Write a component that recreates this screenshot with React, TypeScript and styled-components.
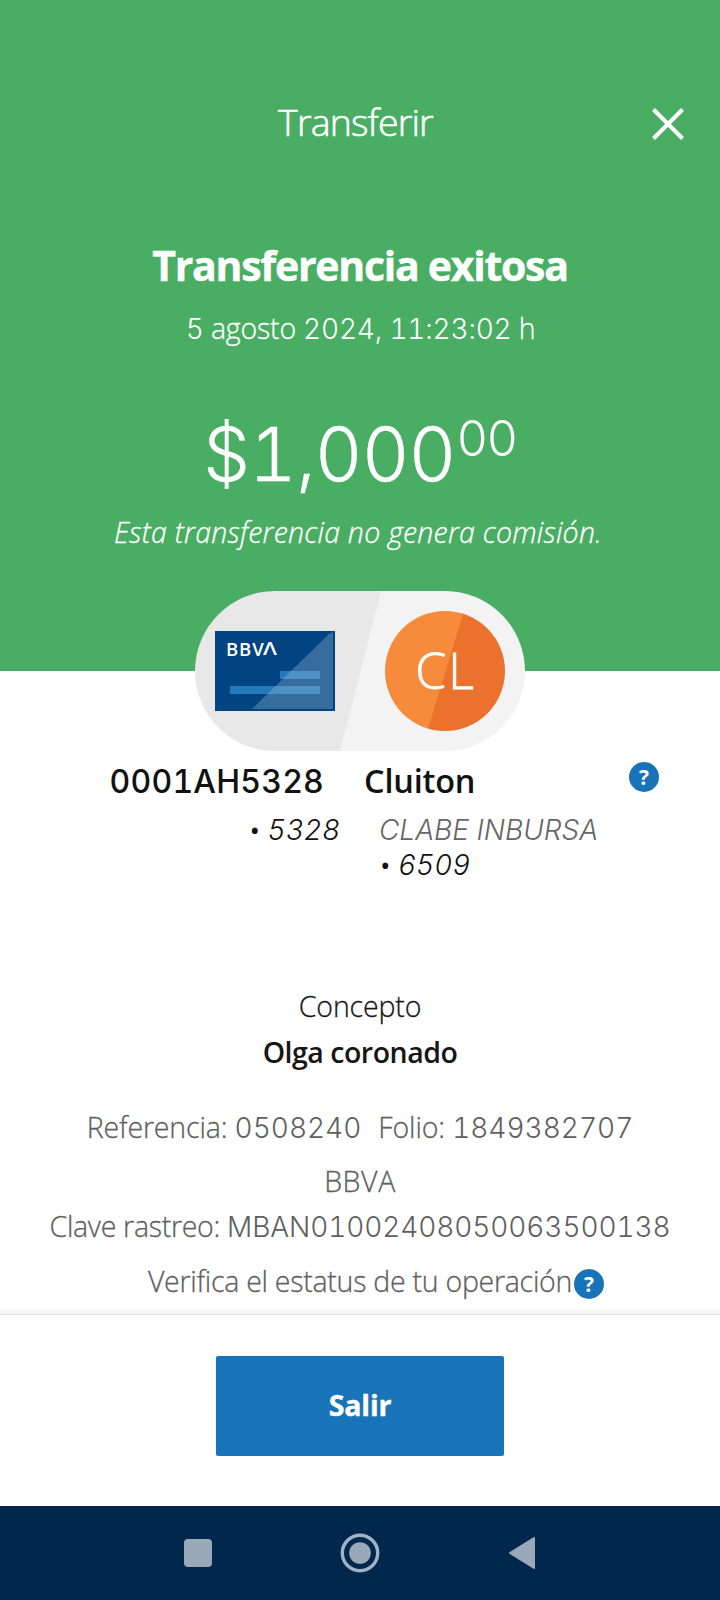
import React from "react";
import styled, { createGlobalStyle, css } from "styled-components";

const GlobalStyle = createGlobalStyle`
  * { box-sizing: border-box; }
  body {
    margin: 0;
    background: #ffffff;
    font-family: "Open Sans", "Noto Sans", sans-serif;
    font-weight: 300;
    color: #121212;
  }
`;

const tabular = css`
  font-family: "Inter", "Open Sans", sans-serif;
  font-variant-numeric: tabular-nums;
`;

const Screen = styled.main`
  display: flex;
  flex-direction: column;
  width: 720px;
  height: 1600px;
  overflow: hidden;
`;

const Header = styled.header`
  display: flex;
  flex-direction: column;
  align-items: center;
  flex: none;
  height: 671px;
  padding-top: 97px;
  background: #49ae64;
  color: #ffffff;
`;

const TitleBar = styled.div`
  display: grid;
  grid-template-columns: 130px 1fr 130px;
  align-items: center;
  width: 100%;
  height: 50px;
`;

const BarTitle = styled.h1`
  grid-column: 2;
  margin: 0;
  padding-right: 9px;
  font-size: 37.5px;
  line-height: 50px;
  font-weight: 300;
  letter-spacing: -0.85px;
  -webkit-text-stroke: 0.6px currentColor;
  text-align: center;
`;

const CloseButton = styled.button`
  display: flex;
  justify-self: end;
  margin: 3px 35px 0 0;
  padding: 0;
  border: 0;
  background: none;
  color: inherit;
`;

const Success = styled.h2`
  margin: 93px 0 0;
  font-size: 41px;
  line-height: 50px;
  font-weight: 700;
  letter-spacing: -1.27px;
  -webkit-text-stroke: 0.4px currentColor;
`;

const DateLine = styled.p`
  margin: 18px 0 0;
  padding-left: 1px;
  font-size: 28.5px;
  line-height: 40px;
  letter-spacing: -0.2px;
  -webkit-text-stroke: 0.3px currentColor;
  white-space: nowrap;
`;

const Digits = styled.span<{ $gap?: number }>`
  ${tabular}
  font-size: 28px;
  letter-spacing: ${(p) => p.$gap ?? 0}px;
  -webkit-text-stroke: 0;
`;

const Amount = styled.div`
  ${tabular}
  display: flex;
  align-items: flex-start;
  margin-top: 60px;
  font-size: 74px;
  line-height: 90px;
  letter-spacing: -1px;
  -webkit-text-stroke: 0.3px currentColor;
`;

const Cents = styled.span`
  margin-left: 1px;
  font-size: 49px;
  line-height: 60px;
  letter-spacing: -1.6px;
  -webkit-text-stroke: 0;
`;

const Fee = styled.p`
  margin: 13px 0 0;
  padding-right: 4px;
  font-size: 28.5px;
  line-height: 40px;
  font-style: italic;
  letter-spacing: 0.25px;
  -webkit-text-stroke: 0.3px currentColor;
  white-space: nowrap;
`;

const Parties = styled.div`
  display: flex;
  align-items: center;
  justify-content: space-between;
  flex: none;
  width: 330px;
  height: 160px;
  margin-top: 39px;
  padding: 0 20px;
  border-radius: 80px;
  background: linear-gradient(104.4deg, #e8e8e8 50%, #f3f3f3 50.3%);
`;

const Details = styled.section`
  display: flex;
  flex-direction: column;
  flex: none;
  height: 636px;
  padding-top: 90px;
`;

const PartyRow = styled.div<{ $height: number }>`
  display: grid;
  grid-template-columns: 360px 1fr auto;
  height: ${(p) => p.$height}px;
  line-height: ${(p) => p.$height}px;
`;

const Name = styled.strong<{ $side: "from" | "to" }>`
  font-weight: 600;
  ${(p) =>
    p.$side === "from"
      ? css`
          ${tabular}
          padding: 1px 36px 0 0;
          font-size: 32px;
          font-weight: 500;
          text-align: right;
          letter-spacing: 0.2px;
        `
      : css`
          padding-left: 4px;
          font-size: 32.5px;
          letter-spacing: -0.2px;
        `}
`;

const Account = styled.span<{ $side: "from" | "to"; $inset: number }>`
  ${tabular}
  display: flex;
  justify-content: ${(p) => (p.$side === "from" ? "flex-end" : "flex-start")};
  padding: ${(p) => (p.$side === "from" ? `0 ${p.$inset}px 0 0` : `0 0 0 ${p.$inset}px`)};
  font-size: 28px;
  font-style: italic;
  letter-spacing: 0;
`;

const Bullet = styled.span`
  width: 18px;
  font-family: "Open Sans", sans-serif;
  font-style: normal;
  font-weight: 400;
  letter-spacing: 0;
`;

const Bank = styled.span`
  ${tabular}
  grid-column: 2;
  padding-left: 19px;
  font-size: 28px;
  font-style: italic;
  letter-spacing: 0;
  color: #666666;
`;

const Help = styled.button`
  display: flex;
  align-items: center;
  justify-content: center;
  width: 30px;
  height: 30px;
  padding: 0;
  border: 0;
  border-radius: 50%;
  background: #1973b8;
  color: #ffffff;
  font: 700 21px/30px "Open Sans", sans-serif;
`;

const PartyHelp = styled(Help)`
  margin: 1px 61px 0 0;
`;

const Line = styled.p<{ $top: number; $tone?: "muted"; $bold?: boolean; $track?: number }>`
  display: flex;
  align-items: baseline;
  justify-content: center;
  height: 40px;
  margin: ${(p) => p.$top}px 0 0;
  font-size: 28.5px;
  line-height: 40px;
  font-weight: ${(p) => (p.$bold ? 600 : 300)};
  letter-spacing: ${(p) => p.$track ?? -0.15}px;
  color: ${(p) => (p.$tone === "muted" ? "#606060" : "#161616")};
  -webkit-text-stroke: ${(p) => (p.$bold ? 0 : 0.3)}px currentColor;
  white-space: pre;
`;

const Folio = styled.span`
  margin-left: 17px;
`;

const StatusLine = styled(Line)`
  padding-left: 32px;
`;

const StatusHelp = styled(Help)`
  align-self: flex-start;
  margin: 8px 0 0 2px;
  -webkit-text-stroke: 0;
`;

const Footer = styled.footer`
  display: flex;
  justify-content: center;
  flex: none;
  height: 199px;
  padding-top: 49px;
  background: linear-gradient(#ffffff, #f1f1f1 7px, #e2e2e2 7px, #e2e2e2 8px, #f3f3f3 8px, #ffffff 9px);
`;

const ExitButton = styled.button`
  width: 288px;
  height: 100px;
  padding: 0 0 3px;
  border: 0;
  border-radius: 2px;
  background: #1973b8;
  color: #ffffff;
  font: 700 28.5px/40px "Open Sans", sans-serif;
  letter-spacing: -0.15px;
  -webkit-text-stroke: 0.4px currentColor;
`;

const NavBar = styled.nav`
  display: grid;
  grid-template-columns: repeat(3, 40px);
  gap: 122px;
  align-items: center;
  justify-content: center;
  justify-items: center;
  flex: none;
  height: 94px;
  background: #01284c;
`;

const CardFace = styled.div`
  display: grid;
  width: 120px;
  height: 80px;
  background: #004481;

  > * {
    grid-area: 1 / 1;
  }
`;

const CardBrand = styled.span`
  padding: 6px 0 0 11px;
  font-size: 18.5px;
  line-height: 24px;
  font-weight: 600;
  letter-spacing: 0.9px;

  i {
    display: inline-block;
    font-style: normal;
    transform: translate(-2px, -1px) scaleX(1.2);
    transform-origin: 0 100%;
  }
`;

const Avatar = styled.div`
  display: flex;
  align-items: center;
  justify-content: center;
  width: 120px;
  height: 120px;
  padding: 0 0 2px 1px;
  border-radius: 50%;
  background: linear-gradient(107deg, #f78b3c 50%, #ea722d 50.8%);
  font-size: 50px;
  line-height: 60px;
  letter-spacing: 2px;
  -webkit-text-stroke: 0.8px currentColor;
`;

function BankCard() {
  return (
    <CardFace>
      <svg width="120" height="80" viewBox="0 0 120 80">
        <path d="M65 40h40v8H65zM15 55h90v8H15z" fill="#237aba" />
        <path d="M118 1v77H37L114 3z" fill="#a7c4dc" fillOpacity=".32" />
      </svg>
      <CardBrand>
        BBV<i>Λ</i>
      </CardBrand>
    </CardFace>
  );
}

export default function App() {
  return (
    <>
      <GlobalStyle />
      <Screen>
        <Header>
          <TitleBar>
            <BarTitle>Transferir</BarTitle>
            <CloseButton aria-label="Cerrar">
              <svg width="34" height="34" viewBox="0 0 34 34">
                <path d="M2.5 2.5l29 29M31.5 2.5l-29 29" stroke="currentColor" strokeWidth="4" />
              </svg>
            </CloseButton>
          </TitleBar>
          <Success>Transferencia exitosa</Success>
          <DateLine>
            <Digits>5</Digits> agosto <Digits $gap={-0.2}>2024, 11:23:02</Digits> h
          </DateLine>
          <Amount>
            $1,000<Cents>00</Cents>
          </Amount>
          <Fee>Esta transferencia no genera comisión.</Fee>
          <Parties>
            <BankCard />
            <Avatar>CL</Avatar>
          </Parties>
        </Header>

        <Details>
          <PartyRow $height={40}>
            <Name $side="from">0001AH5328</Name>
            <Name $side="to">Cluiton</Name>
            <PartyHelp aria-label="Ayuda">?</PartyHelp>
          </PartyRow>
          <PartyRow $height={35} style={{ marginTop: 12 }}>
            <Account $side="from" $inset={20}>
              <Bullet>•</Bullet>5328
            </Account>
            <Bank>CLABE INBURSA</Bank>
          </PartyRow>
          <PartyRow $height={35}>
            <span />
            <Account $side="to" $inset={20}>
              <Bullet>•</Bullet>6509
            </Account>
          </PartyRow>

          <Line $top={103}>Concepto</Line>
          <Line $top={6} $bold $track={-0.5}>
            Olga coronado
          </Line>
          <Line $top={35} $tone="muted">
            Referencia: <Digits>0508240</Digits>
            <Folio>
              Folio: <Digits>1849382707</Digits>
            </Folio>
          </Line>
          <Line $top={14} $tone="muted" $track={0.6}>
            BBVA
          </Line>
          <Line $top={5} $tone="muted" $track={-0.3}>
            Clave rastreo: <Digits $gap={-0.1}>MBAN01002408050063500138</Digits>
          </Line>
          <StatusLine $top={15} $tone="muted" $track={-0.27}>
            Verifica el estatus de tu operación
            <StatusHelp aria-label="Ayuda">?</StatusHelp>
          </StatusLine>
        </Details>

        <Footer>
          <ExitButton>Salir</ExitButton>
        </Footer>

        <NavBar>
          <svg width="28" height="28" viewBox="0 0 28 28">
            <rect width="28" height="28" rx="4" fill="#9aa9b9" />
          </svg>
          <svg width="40" height="40" viewBox="0 0 40 40" fill="none">
            <circle cx="20" cy="20" r="17.7" stroke="#9fb2c6" strokeWidth="3.4" />
            <circle cx="20" cy="20" r="10.8" fill="#9aa9b9" />
          </svg>
          <svg width="28" height="34" viewBox="0 0 28 34">
            <path d="M26 2v30L2 17z" fill="#9aa9b9" stroke="#9aa9b9" strokeWidth="2" strokeLinejoin="round" />
          </svg>
        </NavBar>
      </Screen>
    </>
  );
}
